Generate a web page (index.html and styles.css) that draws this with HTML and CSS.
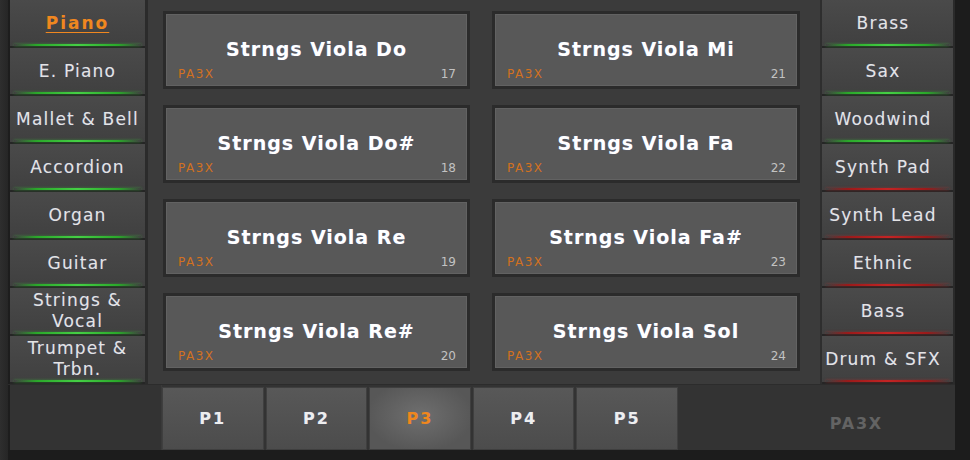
FILE: index.html
```html
<!DOCTYPE html>
<html lang="en">
<head>
    <meta charset="UTF-8">
    <title>PA3X Sound Select</title>
    <link rel="stylesheet" href="styles.css">
</head>
<body>

<div class="screen">
    <div class="main">
        <!-- Left categories -->
        <nav class="cats cats-left">
            <div class="cat active"><span>Piano</span></div>
            <div class="cat"><span>E. Piano</span></div>
            <div class="cat"><span>Mallet &amp; Bell</span></div>
            <div class="cat"><span>Accordion</span></div>
            <div class="cat"><span>Organ</span></div>
            <div class="cat"><span>Guitar</span></div>
            <div class="cat"><span>Strings &amp;<br>Vocal</span></div>
            <div class="cat"><span>Trumpet &amp;<br>Trbn.</span></div>
        </nav>

        <!-- Sound list -->
        <section class="sounds">
            <div class="tile"><div class="tile-name">Strngs Viola Do</div><div class="tile-foot"><span class="tag">PA3X</span><span class="num">17</span></div></div>
            <div class="tile"><div class="tile-name">Strngs Viola Mi</div><div class="tile-foot"><span class="tag">PA3X</span><span class="num">21</span></div></div>
            <div class="tile"><div class="tile-name">Strngs Viola Do#</div><div class="tile-foot"><span class="tag">PA3X</span><span class="num">18</span></div></div>
            <div class="tile"><div class="tile-name">Strngs Viola Fa</div><div class="tile-foot"><span class="tag">PA3X</span><span class="num">22</span></div></div>
            <div class="tile"><div class="tile-name">Strngs Viola Re</div><div class="tile-foot"><span class="tag">PA3X</span><span class="num">19</span></div></div>
            <div class="tile"><div class="tile-name">Strngs Viola Fa#</div><div class="tile-foot"><span class="tag">PA3X</span><span class="num">23</span></div></div>
            <div class="tile"><div class="tile-name">Strngs Viola Re#</div><div class="tile-foot"><span class="tag">PA3X</span><span class="num">20</span></div></div>
            <div class="tile"><div class="tile-name">Strngs Viola Sol</div><div class="tile-foot"><span class="tag">PA3X</span><span class="num">24</span></div></div>
        </section>

        <!-- Right categories -->
        <nav class="cats cats-right">
            <div class="cat"><span>Brass</span></div>
            <div class="cat"><span>Sax</span></div>
            <div class="cat"><span>Woodwind</span></div>
            <div class="cat red"><span>Synth Pad</span></div>
            <div class="cat red"><span>Synth Lead</span></div>
            <div class="cat red"><span>Ethnic</span></div>
            <div class="cat red"><span>Bass</span></div>
            <div class="cat red"><span>Drum &amp; SFX</span></div>
        </nav>
    </div>

    <!-- Page tabs -->
    <div class="bottom">
        <div class="bottom-left"></div>
        <div class="pages">
            <div class="page">P1</div>
            <div class="page">P2</div>
            <div class="page on">P3</div>
            <div class="page">P4</div>
            <div class="page">P5</div>
        </div>
        <div class="brand">PA3X</div>
    </div>
</div>

</body>
</html>
```

FILE: styles.css
```css
* {
    box-sizing: border-box;
}
body {
    margin: 0;
    width: 970px;
    height: 460px;
    overflow: hidden;
    background: #1c1c1c;
    font-family: "DejaVu Sans", Verdana, sans-serif;
}
.screen {
    height: 460px;
    display: flex;
    flex-direction: column;
    padding: 0 15px 10px 8px;
    background: linear-gradient(90deg, #2e2e2e 0, #262626 8px, transparent 8px);
}
.main {
    display: flex;
    height: 384px;
}

/* categories */
.cats {
    display: flex;
    flex-direction: column;
    background: #2a2a2a;
}
.cats-left {
    width: 140px;
    border-left: 2px solid #1d1d1d;
    border-right: 3px solid #2b2b2b;
}
.cats-right {
    width: 135px;
    border-left: 2px solid #2e2e2e;
    border-right: 2px solid #2a2a2a;
}
.cats-right .cat {
    padding-right: 9px;
}
.cat {
    position: relative;
    height: 48px;
    display: flex;
    align-items: center;
    justify-content: center;
    text-align: center;
    padding: 2px 0;
    border-bottom: 2px solid #262626;
    background: linear-gradient(#4a4a4a, #404040);
    color: #e4e4e4;
    font-size: 17px;
    letter-spacing: 1.2px;
    line-height: 21px;
    text-shadow: 0 0 1px rgba(120, 140, 255, 0.35);
}
.cat::after {
    content: "";
    position: absolute;
    left: 4px;
    right: 4px;
    bottom: 0;
    height: 2px;
    background: linear-gradient(90deg, transparent, #2aa82a 18%, #45d045 50%, #2aa82a 82%, transparent);
    box-shadow: 0 0 3px rgba(60, 200, 60, 0.5);
}
.cat.red::after {
    background: linear-gradient(90deg, transparent, #9a1a1a 18%, #c42424 50%, #9a1a1a 82%, transparent);
    box-shadow: 0 0 3px rgba(200, 40, 40, 0.5);
}
.cat.active span {
    color: #f0871f;
    font-weight: bold;
    letter-spacing: 2px;
    text-decoration: underline;
    text-underline-offset: 3px;
    text-shadow: none;
}

/* sound tiles */
.sounds {
    flex: 1;
    background: #3b3b3b;
    padding: 11px 20px 0 15px;
    display: grid;
    grid-template-columns: 307px 308px;
    grid-template-rows: repeat(4, 78px);
    column-gap: 22px;
    row-gap: 16px;
    align-content: start;
}
.tile {
    display: flex;
    flex-direction: column;
    background: #585858;
    border: 3px solid #2b2b2b;
    box-shadow: inset 0 0 0 1px #626262;
}
.tile-name {
    margin-top: 24px;
    text-align: center;
    color: #fff;
    font-weight: bold;
    font-size: 19px;
    line-height: 22px;
    letter-spacing: 1px;
    text-shadow: 0 0 1px rgba(120, 150, 255, 0.5);
}
.tile-foot {
    margin-top: auto;
    display: flex;
    justify-content: space-between;
    align-items: center;
    padding: 0 11px 5px 12px;
    font-size: 12px;
    line-height: 14px;
}
.tag {
    color: #d2711f;
    letter-spacing: 1.5px;
}
.num {
    color: #c2c2c2;
}

/* bottom bar */
.bottom {
    display: flex;
    height: 66px;
    background: #333;
    border-top: 1px solid #2c2c2c;
}
.bottom-left {
    width: 154px;
    border-left: 2px solid #1d1d1d;
    border-right: 1px solid #3a3a3a;
}
.pages {
    width: 516px;
    padding-top: 2px;
    display: grid;
    grid-template-columns: repeat(5, 1fr);
    gap: 2px;
}
.page {
    display: flex;
    align-items: center;
    justify-content: center;
    background: linear-gradient(#585858, #4c4c4c);
    border: 1px solid #3f3f3f;
    color: #eee;
    font-weight: bold;
    font-size: 16px;
    letter-spacing: 2px;
    text-shadow: 0 0 1px rgba(120, 150, 255, 0.5);
}
.page.on {
    color: #f0871d;
    background: radial-gradient(ellipse at 50% 45%, #6f6f6f, #575757 75%);
    text-shadow: none;
}
.brand {
    flex: 1;
    display: flex;
    align-items: center;
    justify-content: flex-end;
    padding: 12px 72px 0 0;
    color: #636363;
    font-weight: bold;
    font-size: 16px;
    letter-spacing: 1.8px;
}
```
